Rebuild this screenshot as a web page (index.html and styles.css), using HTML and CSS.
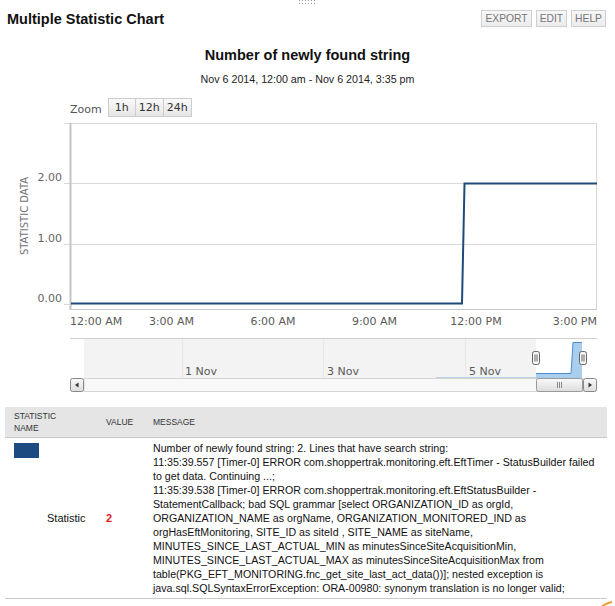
FILE: index.html
```html
<!DOCTYPE html>
<html>
<head>
<meta charset="utf-8">
<link rel="stylesheet" href="styles.css">
</head>
<body>
<div class="grip-bar">
  <svg class="grip" width="18" height="6" viewBox="0 0 18 6">
    <g fill="#9a9a9a">
      <rect x="1" y="0" width="1" height="1"/><rect x="4" y="0" width="1" height="1"/><rect x="7" y="0" width="1" height="1"/><rect x="10" y="0" width="1" height="1"/><rect x="13" y="0" width="1" height="1"/><rect x="16" y="0" width="1" height="1"/>
      <rect x="1" y="3" width="1" height="1"/><rect x="4" y="3" width="1" height="1"/><rect x="7" y="3" width="1" height="1"/><rect x="10" y="3" width="1" height="1"/><rect x="13" y="3" width="1" height="1"/><rect x="16" y="3" width="1" height="1"/>
    </g>
  </svg>
</div>
<div class="header">
  <div class="title">Multiple Statistic Chart</div>
  <div class="actions">
    <span class="btn">EXPORT</span>
    <span class="btn">EDIT</span>
    <span class="btn">HELP</span>
  </div>
</div>
<div class="chart-title">Number of newly found string</div>
<div class="chart-subtitle">Nov 6 2014, 12:00 am - Nov 6 2014, 3:35 pm</div>
<div class="zoom-row">
  <span class="zoom-label">Zoom</span>
  <span class="zbtn z1">1h</span><span class="zbtn z12">12h</span><span class="zbtn z24">24h</span>
</div>
<svg class="plot" width="615" height="275" viewBox="0 120 615 275">
  <defs>
    <linearGradient id="btn" x1="0" y1="0" x2="0" y2="1">
      <stop offset="0" stop-color="#fafafa"/>
      <stop offset="1" stop-color="#dcdcdc"/>
    </linearGradient>
  </defs>
  <path d="M64 123.5H597M64 183.5H597M64 244.5H597M64 304.5H71" stroke="#d9d9d9" fill="none"/>
  <line x1="70.5" y1="123" x2="70.5" y2="310" stroke="#c4c4c4" stroke-width="2"/>
  <line x1="596.5" y1="123" x2="596.5" y2="309" stroke="#d6d6d6"/>
  <line x1="70" y1="309.5" x2="597" y2="309.5" stroke="#c8c8c8"/>
  <path d="M71 303.5H462L464.5 183.5H597" stroke="#1f4b7a" stroke-width="2" fill="none"/>
  <g class="ylab">
    <text x="62" y="181">2.00</text>
    <text x="62" y="242">1.00</text>
    <text x="62" y="302">0.00</text>
  </g>
  <text class="ytitle" transform="translate(28 216) rotate(-90)">STATISTIC DATA</text>
  <g class="xlab">
    <text class="first" x="70" y="325">12:00 AM</text>
    <text x="171.5" y="325">3:00 AM</text>
    <text x="273" y="325">6:00 AM</text>
    <text x="374.5" y="325">9:00 AM</text>
    <text x="476" y="325">12:00 PM</text>
    <text class="last" x="597" y="325">3:00 PM</text>
  </g>
  <rect x="84" y="339" width="452" height="39" fill="#f3f3f3"/>
  <path d="M182.5 339V378M323.5 339V378M465.5 339V378" stroke="#e8e8e8"/>
  <line x1="70" y1="338.5" x2="597" y2="338.5" stroke="#d0d0d0"/>
  <line x1="436" y1="377.5" x2="536" y2="377.5" stroke="#b9d2ea"/>
  <path d="M536 373H571L573 342H582V378H536Z" fill="#a9cdec"/>
  <path d="M536 373.5H571L573 342.5H582" stroke="#4f8ad0" fill="none"/>
  <g class="navlab">
    <text x="185" y="375">1 Nov</text>
    <text x="327" y="375">3 Nov</text>
    <text x="469" y="375">5 Nov</text>
  </g>
  <g class="handle">
    <rect x="532.5" y="351.5" width="7" height="13" rx="2" fill="#f4f4f4" stroke="#666"/>
    <path d="M535 354.5V361.5M537 354.5V361.5" stroke="#666"/>
    <rect x="579.5" y="351.5" width="7" height="13" rx="2" fill="#f4f4f4" stroke="#666"/>
    <path d="M582 354.5V361.5M584 354.5V361.5" stroke="#666"/>
  </g>
  <rect x="84" y="378.5" width="499" height="13" fill="#f8f8f8" stroke="#d4d4d4"/>
  <rect x="70.5" y="378.5" width="13" height="13" rx="2" fill="url(#btn)" stroke="#888"/>
  <path d="M78.5 382.5L75 385L78.5 387.5Z" fill="#333"/>
  <rect x="536.5" y="378.5" width="46" height="13" rx="2" fill="url(#btn)" stroke="#999"/>
  <path d="M557.5 382V388M559.5 382V388M561.5 382V388" stroke="#8a8a8a"/>
  <rect x="583.5" y="378.5" width="13" height="13" rx="2" fill="url(#btn)" stroke="#888"/>
  <path d="M588.5 382.5L592 385L588.5 387.5Z" fill="#333"/>
</svg>
<table class="stats">
  <colgroup>
    <col class="c-sw"><col class="c-name"><col class="c-val"><col class="c-msg">
  </colgroup>
  <thead>
    <tr>
      <th colspan="2">STATISTIC<br>NAME</th>
      <th>VALUE</th>
      <th>MESSAGE</th>
    </tr>
  </thead>
  <tbody>
    <tr>
      <td class="sw-cell"><div class="swatch"></div></td>
      <td class="name">Statistic</td>
      <td class="val">2</td>
      <td class="msg">Number of newly found string: 2. Lines that have search string:<br>11:35:39.557 [Timer-0] ERROR com.shoppertrak.monitoring.eft.EftTimer - StatusBuilder failed<br>to get data. Continuing ...;<br>11:35:39.538 [Timer-0] ERROR com.shoppertrak.monitoring.eft.EftStatusBuilder -<br>StatementCallback; bad SQL grammar [select ORGANIZATION_ID as orgId,<br>ORGANIZATION_NAME as orgName, ORGANIZATION_MONITORED_IND as<br>orgHasEftMonitoring, SITE_ID as siteId , SITE_NAME as siteName,<br>MINUTES_SINCE_LAST_ACTUAL_MIN as minutesSinceSiteAcquisitionMin,<br>MINUTES_SINCE_LAST_ACTUAL_MAX as minutesSinceSiteAcquisitionMax from<br>table(PKG_EFT_MONITORING.fnc_get_site_last_act_data())]; nested exception is<br>java.sql.SQLSyntaxErrorException: ORA-00980: synonym translation is no longer valid;</td>
    </tr>
  </tbody>
</table>
<div class="corner">
  <svg width="14" height="8" viewBox="0 0 14 8"><path d="M1 8Q6 3 13 2L13 4Q8 5 4 8Z" fill="#f0a030"/></svg>
</div>
</body>
</html>
```

FILE: styles.css
```css
html, body {
  margin: 0;
  padding: 0;
  background: #fff;
}
body {
  width: 615px;
  height: 606px;
  overflow: hidden;
  font-family: "Liberation Sans", Arial, sans-serif;
  color: #000;
}
.grip-bar {
  height: 8px;
  display: flex;
  justify-content: center;
}
.grip {
  display: block;
  margin-left: -2px;
}
.header {
  height: 21px;
  display: flex;
  align-items: center;
  justify-content: space-between;
  padding: 0 9px 0 7px;
}
.title {
  font-size: 14.5px;
  font-weight: bold;
  color: #111;
}
.actions {
  display: flex;
  gap: 4px;
}
.btn {
  display: block;
  height: 15px;
  line-height: 15px;
  padding: 0 3px;
  border: 1px solid #cfcfcf;
  background: linear-gradient(#f7f7f7, #ececec);
  color: #777;
  font-size: 10.3px;
}
.chart-title {
  margin-top: 17px;
  line-height: 18px;
  text-align: center;
  font-size: 14.5px;
  font-weight: bold;
  color: #111;
}
.chart-subtitle {
  margin-top: 8px;
  line-height: 14px;
  text-align: center;
  font-size: 10.7px;
  color: #222;
}
.zoom-row {
  margin-top: 12px;
  height: 19px;
  display: flex;
  align-items: center;
  padding-left: 70px;
  font-family: "DejaVu Sans", Verdana, sans-serif;
  font-size: 11px;
}
.zoom-label {
  color: #555;
  margin-right: 6px;
  padding-top: 3px;
}
.zbtn {
  display: block;
  height: 17px;
  line-height: 17px;
  border: 1px solid #cdcdcd;
  border-right: none;
  background: linear-gradient(#f9f9f9, #e6e6e6);
  color: #333;
  text-align: center;
}
.zbtn.z24 { border-right: 1px solid #cdcdcd; }
.z1 { width: 26px; }
.z12 { width: 27px; }
.z24 { width: 27px; }
.plot {
  display: block;
  margin-top: 3px;
  font-family: "DejaVu Sans", Verdana, sans-serif;
}
.ylab text {
  font-size: 11px;
  fill: #666;
  text-anchor: end;
}
.ytitle {
  font-size: 10px;
  fill: #707070;
  text-anchor: middle;
}
.xlab text {
  font-size: 11px;
  fill: #5a5a5a;
  text-anchor: middle;
}
.xlab text.first { text-anchor: start; }
.xlab text.last { text-anchor: end; }
.navlab text {
  font-size: 11px;
  fill: #5a5a5a;
}
.stats {
  margin: 12px 0 0 5px;
  width: 602px;
  table-layout: fixed;
  border-collapse: collapse;
  font-family: "Liberation Sans", Arial, sans-serif;
}
.c-sw { width: 37px; }
.c-name { width: 55px; }
.c-val { width: 48px; }
.c-msg { width: 462px; }
.stats th {
  background: #e5e5e5;
  border-bottom: 1px solid #c9c9c9;
  font-size: 8.5px;
  font-weight: normal;
  color: #333;
  text-align: left;
  line-height: 11.5px;
  padding: 4px 0 3px 9px;
  height: 23px;
}
.stats th:last-child { padding-left: 8px; }
.stats td {
  border-bottom: 1px solid #c9c9c9;
  font-size: 11px;
  color: #111;
  vertical-align: middle;
}
.stats td.sw-cell {
  vertical-align: top;
  padding: 5px 0 0 9px;
}
.swatch {
  width: 25px;
  height: 15px;
  background: #1c4b82;
}
.stats td.name {
  padding-left: 5px;
}
.stats td.val {
  padding-left: 9px;
  color: #e01b1b;
  font-weight: bold;
}
.stats td.msg {
  padding: 3px 0 3px 8px;
  font-size: 10.65px;
  line-height: 14px;
  white-space: nowrap;
  overflow: visible;
}
.corner {
  display: flex;
  justify-content: flex-end;
  padding-right: 2px;
}
.corner svg { display: block; }
```
